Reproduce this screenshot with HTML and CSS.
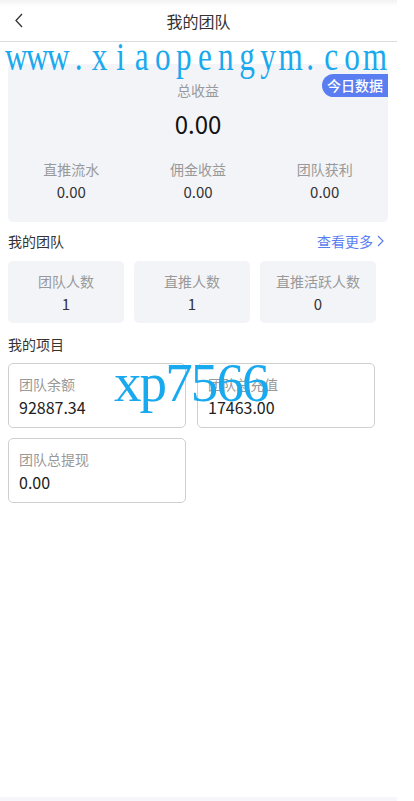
FILE: index.html
```html
<!DOCTYPE html>
<html lang="zh-CN">
<head>
<meta charset="utf-8">
<title>我的团队</title>
<link rel="stylesheet" href="styles.css">
</head>
<body>
<div class="page">
  <header class="topbar">
    <span class="back">
      <svg width="8" height="15" viewBox="0 0 8 15"><polyline points="7,1 1,7.5 7,14" fill="none" stroke="#333" stroke-width="1.3"/></svg>
    </span>
    <h1 class="title">我的团队</h1>
  </header>

  <section class="summary">
    <span class="badge">今日数据</span>
    <div class="sum-label">总收益</div>
    <div class="sum-value">0.00</div>
    <div class="sum-cols">
      <div class="sum-col"><div class="lbl">直推流水</div><div class="val">0.00</div></div>
      <div class="sum-col"><div class="lbl">佣金收益</div><div class="val">0.00</div></div>
      <div class="sum-col"><div class="lbl">团队获利</div><div class="val">0.00</div></div>
    </div>
  </section>

  <div class="sec-head first">
    <span class="sec-title">我的团队</span>
    <span class="more">查看更多<svg width="7" height="12" viewBox="0 0 7 12"><polyline points="1,1 6,6 1,11" fill="none" stroke="#5a7ef2" stroke-width="1.2"/></svg></span>
  </div>
  <div class="stats">
    <div class="stat"><div class="lbl">团队人数</div><div class="val">1</div></div>
    <div class="stat"><div class="lbl">直推人数</div><div class="val">1</div></div>
    <div class="stat"><div class="lbl">直推活跃人数</div><div class="val">0</div></div>
  </div>

  <div class="sec-head second">
    <span class="sec-title">我的项目</span>
  </div>
  <div class="projects">
    <div class="proj"><div class="plbl">团队余额</div><div class="pval">92887.34</div></div>
    <div class="proj"><div class="plbl">团队总充值</div><div class="pval">17463.00</div></div>
    <div class="proj"><div class="plbl">团队总提现</div><div class="pval">0.00</div></div>
  </div>

  <div class="spacer"></div>
  <div class="bottom-strip"></div>
</div>

<div class="wm wm-url"><span>w</span><span>w</span><span>w</span><span>.</span><span>x</span><span>i</span><span>a</span><span>o</span><span>p</span><span>e</span><span>n</span><span>g</span><span>y</span><span>m</span><span>.</span><span>c</span><span>o</span><span>m</span></div>
<div class="wm wm-code"><span>x</span><span>p</span><span>7</span><span>5</span><span>6</span><span>6</span></div>
</body>
</html>
```

FILE: styles.css
```css
html, body {
  margin: 0;
  padding: 0;
  background: #fff;
}
body {
  position: relative;
  width: 414px;
  height: 801px;
  overflow: hidden;
  font-family: "Noto Sans CJK SC", "Noto Sans", sans-serif;
  color: #333;
}
.page {
  width: 397px;
  height: 801px;
  display: flex;
  flex-direction: column;
}
.topbar {
  position: relative;
  height: 41px;
  border-bottom: 1px solid #dcdcdc;
  background: linear-gradient(to bottom, #f2f2f2 0, #fff 6px);
  display: flex;
  align-items: center;
  justify-content: center;
}
.back {
  position: absolute;
  left: 15px;
  top: 13px;
  display: flex;
}
.title {
  margin: 0;
  font-size: 16px;
  font-weight: normal;
  line-height: 20px;
  color: #333;
}
.summary {
  position: relative;
  margin: 22px 9px 0 8px;
  background: #f3f4f8;
  border-radius: 5px;
  padding: 16px 0 20px;
  text-align: center;
}
.badge {
  position: absolute;
  top: 10px;
  right: 0;
  width: 66px;
  height: 23px;
  line-height: 23px;
  text-align: center;
  background: #5a7ef2;
  color: #fff;
  font-size: 14px;
  font-weight: 500;
  border-radius: 12px 0 0 12px;
}
.sum-label {
  font-size: 14px;
  line-height: 20px;
  color: #999;
}
.sum-value {
  margin-top: 7px;
  font-size: 24px;
  line-height: 34px;
  color: #111;
}
.sum-cols {
  margin-top: 18px;
  display: grid;
  grid-template-columns: 1fr 1fr 1fr;
}
.lbl {
  font-size: 14px;
  line-height: 20px;
  color: #999;
}
.val {
  margin-top: 3px;
  font-size: 15px;
  line-height: 20px;
  color: #333;
}
.sec-head {
  margin: 0 13px 0 8px;
  height: 20px;
  display: flex;
  align-items: center;
  justify-content: space-between;
}
.sec-head.first { margin-top: 9px; margin-bottom: 10px; }
.sec-head.second { margin-top: 11px; margin-bottom: 9px; }
.sec-title {
  font-size: 14px;
  line-height: 20px;
  color: #333;
}
.more {
  font-size: 14px;
  line-height: 20px;
  color: #5a7ef2;
  display: flex;
  align-items: center;
  gap: 4px;
}
.stats {
  margin-left: 8px;
  display: grid;
  grid-template-columns: 116px 116px 116px;
  gap: 10px;
}
.stat {
  background: #f3f4f8;
  border-radius: 5px;
  padding: 10px 0 9px;
  text-align: center;
}
.projects {
  margin-left: 8px;
  display: grid;
  grid-template-columns: 178px 178px;
  column-gap: 11px;
  row-gap: 10px;
}
.proj {
  border: 1px solid #cfcfcf;
  border-radius: 5px;
  padding: 10px 10px 9px;
}
.plbl {
  font-size: 14px;
  line-height: 20px;
  color: #999;
}
.pval {
  margin-top: 2px;
  font-size: 16px;
  line-height: 22px;
  color: #222;
}
.spacer { flex: 1; }
.bottom-strip {
  height: 4px;
  background: #f6f6fb;
}
.wm {
  position: absolute;
  display: flex;
  font-family: "Liberation Serif", serif;
  color: #19a9ee;
  pointer-events: none;
}
.wm span {
  text-align: center;
}
.wm-url {
  left: 5px;
  top: 33px;
  font-size: 39px;
  line-height: 48px;
  transform: scaleX(0.8);
  transform-origin: left top;
}
.wm-url span { width: 26.3px; }
.wm-code {
  left: 114px;
  top: 352px;
  font-size: 55px;
  line-height: 62px;
}
.wm-code span { width: 25.6px; }
```
